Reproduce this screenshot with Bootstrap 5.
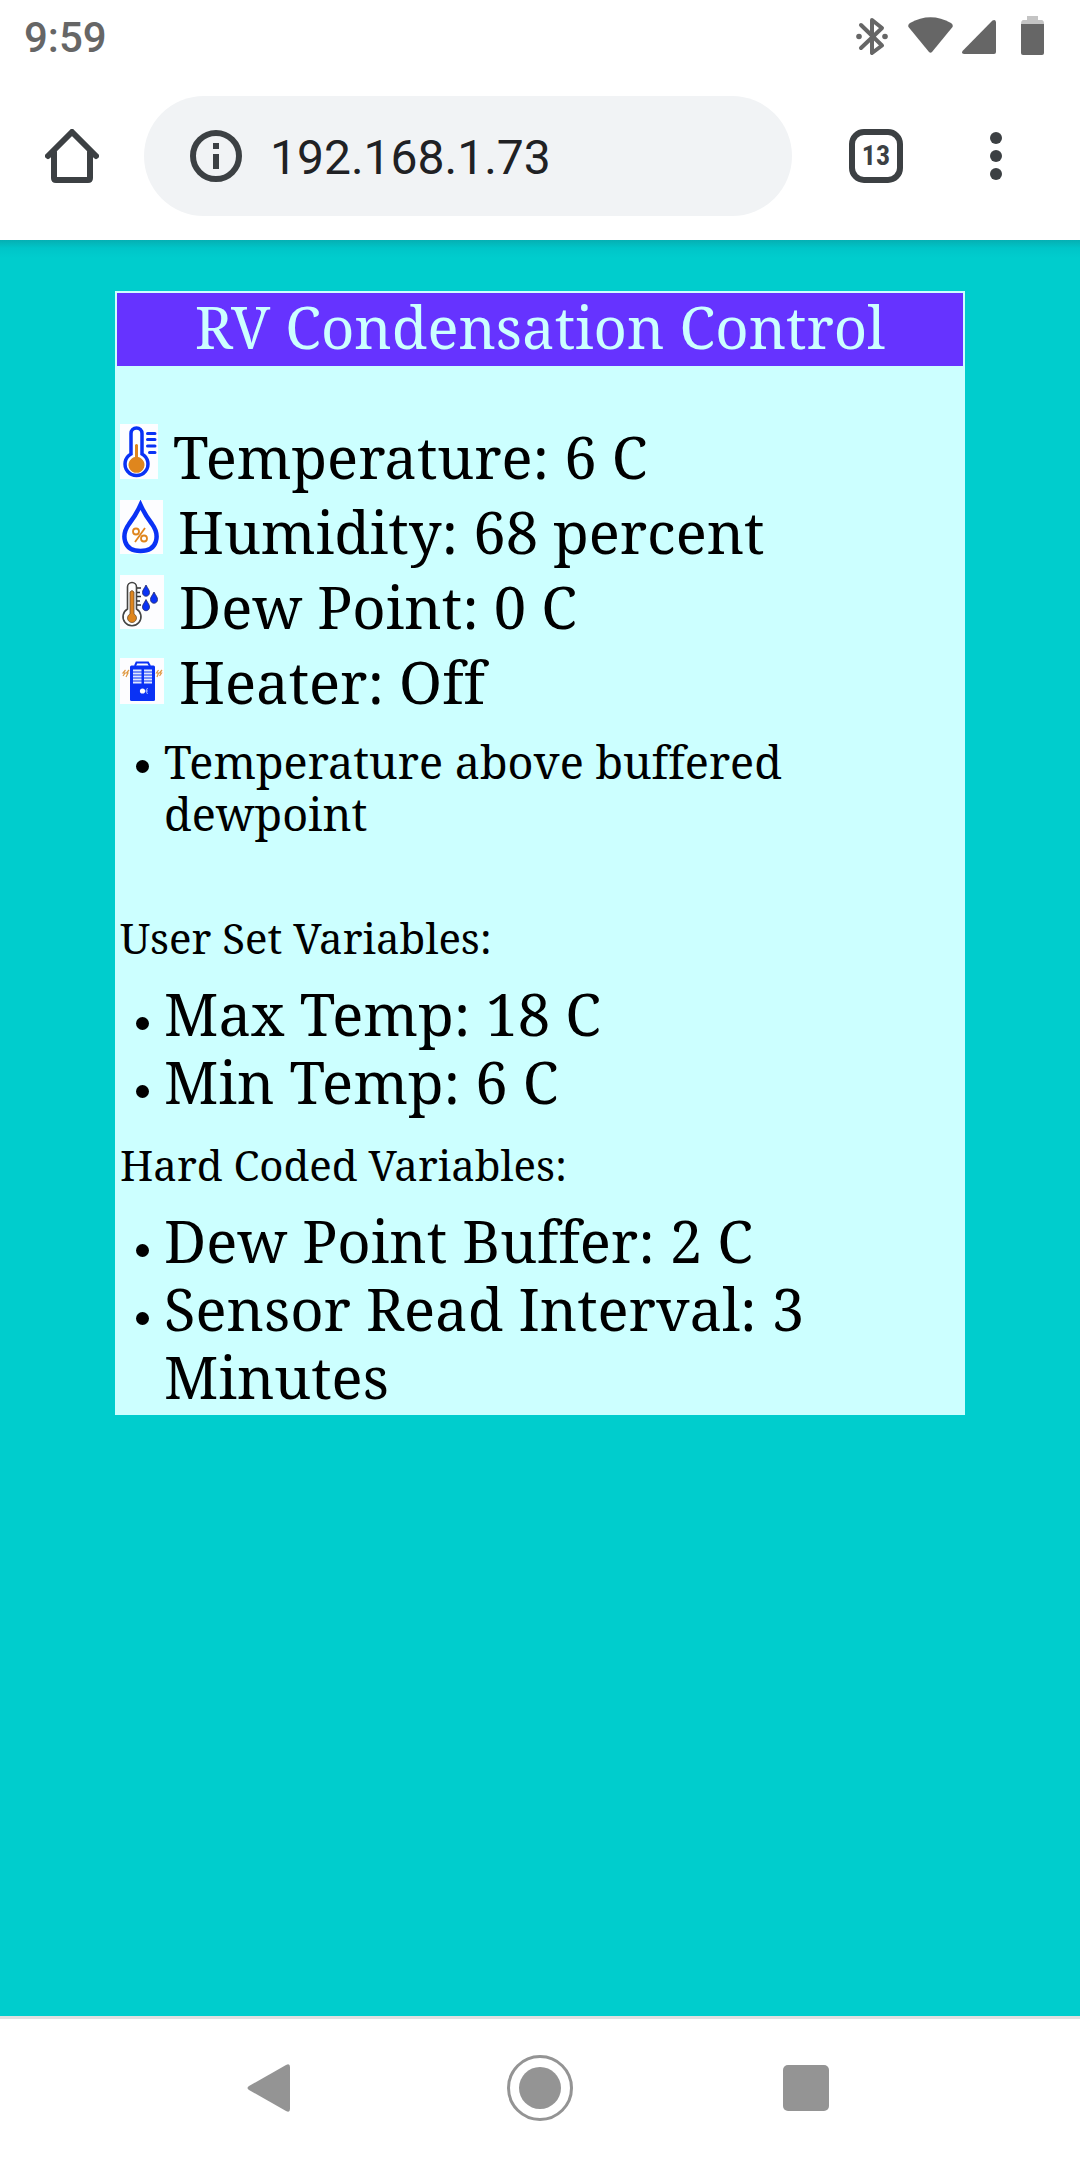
<!DOCTYPE html>
<html lang="en">
<head>
<meta charset="utf-8">
<meta name="viewport" content="width=device-width, initial-scale=1">
<title>RV Condensation Control</title>
<link href="https://cdn.jsdelivr.net/npm/bootstrap@5.3.0/dist/css/bootstrap.min.css" rel="stylesheet">
<style>
  body { font-family: Roboto, sans-serif; background: #fff; }
  svg { flex: none; }
  .status-bar { height: 72px; padding: 16px 36px 0 24px; color: #666; }
  .status-bar time { font-size: 42px; line-height: 44px; font-weight: 500; }
  .browser-bar { height: 168px; padding: 24px 54px 24px 45px; color: #3c4043; }
  .browser-bar .btn, .nav-keys .btn { --bs-btn-padding-x: 0; --bs-btn-padding-y: 0; flex: none; color: inherit; line-height: 1; border: 0; }
  .address { height: 120px; margin: 0 57px 0 45px; padding: 0 46px; background: #f1f3f5; gap: 28px; }
  .address input { font-size: 48px; line-height: 60px; color: #202124; }
  .address .url { padding: 3px 0 0; }
  .browser-bar .tab-count { width: 54px; height: 54px; border: 6px solid #3c4043; border-radius: 15px; font: 700 28px/42px "Roboto Condensed", Roboto, sans-serif; }
  .browser-bar .more { margin-left: 63px; width: 60px; }
  .page-view { background: linear-gradient(#05afb3, #00c5c8 8px, #00cdcd 18px); padding: 51px 115px; }
  .panel { background: #cff; color: #000; padding: 2px 2px 4px; font-family: "Noto Serif", "Droid Serif", "DejaVu Serif Condensed", "DejaVu Serif", serif; font-size: 58px; font-variant-ligatures: none; }
  .panel h1 { background: #63f; color: #cff; font-size: 58px; line-height: 67px; font-weight: 400; margin: 0 0 53px; padding-bottom: 6px; }
  .reading { line-height: 75px; padding-left: 3px; }
  .reading svg { margin-right: 15px; }
  .panel h2 { font-size: 42px; line-height: 56px; font-weight: 400; margin: 0; padding-left: 3px; }
  .panel ul { list-style: none; padding-left: 47px; line-height: 68px; margin: 14px 0 21px; }
  .panel li::before { content: ""; display: inline-block; width: 13px; height: 13px; border-radius: 50%; background: #000; margin: 0 15px 0 -28px; vertical-align: 6px; }
  .panel .notes { font-size: 45px; line-height: 52px; margin: 17px 0 70px; }
  .nav-keys { height: 144px; padding-bottom: 4px; border-top: 3px solid #e0e0e0; color: #949494; gap: 200px; }
</style>
</head>
<body>
<div class="d-flex flex-column min-vh-100">
  <header>
    <div class="status-bar d-flex justify-content-between align-items-start">
      <time>9:59</time>
      <div class="d-flex" aria-hidden="true">
        <svg width="188" height="40" viewBox="856 16 188 40" fill="#666">
          <path d="M861 25L882 45.500L872 53V20L882 28L861 48" fill="none" stroke="#666" stroke-width="4" stroke-linejoin="round" stroke-linecap="round"/>
          <circle cx="859" cy="36.500" r="2.800"/><circle cx="885" cy="36.500" r="2.800"/>
          <path d="M908.500 27Q907.500 24.500 910 23Q930.500 11.500 951 23Q953.500 24.500 952.500 27L932 52Q930.500 53.500 929 52Z"/>
          <path d="M963 50.500L992.500 20.500Q995.500 19 996 22V52Q996 54 994 54H964Q960.500 53.500 963 50.500Z"/>
          <path d="M1027 16H1038V20H1042Q1044 20.500 1044 24H1021Q1021 20.500 1023 20H1027Z" fill="#c4c4c4"/>
          <path d="M1021 24H1044V53Q1044 55 1042 55H1023Q1021 55 1021 53Z"/>
        </svg>
      </div>
    </div>
    <div class="browser-bar d-flex align-items-center">
      <button class="btn" type="button" aria-label="Home">
        <svg width="54" height="54" viewBox="0 0 54 54" fill="none" stroke="currentColor" stroke-width="6" stroke-linejoin="round" stroke-linecap="round"><path d="M3 27L27 3L51 27M9 23V49Q9 51 11 51H43Q45 51 45 49V23"/></svg>
      </button>
      <form class="address rounded-pill d-flex align-items-center flex-fill">
        <svg width="52" height="52" viewBox="0 0 52 52" aria-hidden="true"><circle cx="26" cy="26" r="23" fill="none" stroke="currentColor" stroke-width="6"/><path d="M23 13H29V19H23ZM23 24H29V39H23Z" fill="currentColor"/></svg>
        <input class="url border-0 bg-transparent flex-fill w-100" type="text" aria-label="Address" value="192.168.1.73">
      </form>
      <button class="btn tab-count" type="button" aria-label="13 open tabs">13</button>
      <button class="btn more" type="button" aria-label="More options">
        <svg width="12" height="48" viewBox="0 0 12 48" fill="currentColor"><circle cx="6" cy="6" r="6"/><circle cx="6" cy="24" r="6"/><circle cx="6" cy="42" r="6"/></svg>
      </button>
    </div>
  </header>

  <main class="page-view flex-fill">
    <div class="panel">
      <h1 class="text-center">RV Condensation Control</h1>
      <div class="reading"><svg class="d-inline align-baseline" width="38" height="55" viewBox="0 0 38 55"><path fill="#fdfdff" d="M0 0H38V55H0Z"/><path d="M11 30V9.500A5.500 5.500 0 0 1 22 9.500V30A11.500 11.500 0 1 1 11 30Z" fill="#fff" stroke="#0a32f5" stroke-width="3.500"/><path d="M15 21Q16.500 19 18 21V33A8 8 0 1 1 15 33Z" fill="#df861d"/><path d="M27.500 9.500H35M27.500 15.500H35M27.500 22H35M29.500 28.500H35" stroke="#0a32f5" stroke-width="3" stroke-linecap="round"/></svg>Temperature: 6 C</div>
      <div class="reading"><svg class="d-inline align-baseline" width="43" height="54" viewBox="0 0 43 54"><path fill="#fdfdff" d="M0 0H43V54H0Z"/><path d="M20.500 5Q16 15 9 24C1 35 3 51 20.500 51C38 51 40 35 32 24Q25 15 20.500 5Z" fill="#fff" stroke="#0a32f5" stroke-width="4.500"/><g fill="none" stroke="#df861d" stroke-width="1.800"><circle cx="16" cy="31.500" r="3"/><circle cx="24" cy="38.500" r="3"/><path d="M25 28L15 42"/></g></svg>Humidity: 68 percent</div>
      <div class="reading"><svg class="d-inline align-baseline" width="44" height="54" viewBox="0 0 44 54"><path fill="#fdfdff" d="M0 0H44V54H0Z"/><path d="M7.500 34V12A4.500 4.500 0 0 1 16.500 12V34A9 9 0 1 1 7.500 34Z" fill="#fff" stroke="#444" stroke-width="1.600"/><path d="M10 17Q12 14 14 17V39A4.500 4.500 0 1 1 10 39Z" fill="#df861d" stroke="#705030" stroke-width=".8"/><path d="M17 13H21M17 17.500H20M17 21.500H21M17 26H20M17 30H21" stroke="#333" stroke-width="1.400"/><g fill="#0a32f5" stroke="#222a66" stroke-width=".8"><path id="drop" d="M26 10C24 14 22.500 15 22.500 17.500C22.500 22.500 29.500 22.500 29.500 17.500C29.500 15 28 14 26 10Z"/><use href="#drop" x="8" y="7"/><use href="#drop" y="14.500"/></g></svg>Dew Point: 0 C</div>
      <div class="reading"><svg class="d-inline align-baseline" width="44" height="46" viewBox="0 0 44 46"><path fill="#fdfdff" d="M0 0H44V46H0Z"/><path d="M15 8L16.500 4.500H28L30 8" fill="none" stroke="#0a32f5" stroke-width="2"/><rect x="10" y="7.500" width="25" height="35.500" rx="1.500" fill="#0a32f5"/><path d="M13 12.500H21.500M13 15.500H21.500M13 18.500H21.500M13 21.500H21.500M13 24.500H21.500M24 12.500H32M24 15.500H32M24 18.500H32M24 21.500H32M24 24.500H32" stroke="#dfe8ff" stroke-width="1.800"/><circle cx="22.500" cy="33" r="2.600" fill="#fff"/><path d="M27.500 30L26 33L27.500 36M25.500 33H28" fill="none" stroke="#a9bcff"/><path d="M5.500 12L3 15H5L3 18M9 12L6.500 15H8L6 19M38.500 12L36.500 15H38.500L37 19M42 12L39.500 15H41.500L39.500 18" fill="none" stroke="#df9a45" stroke-width="1.200"/></svg>Heater: Off</div>
      <ul class="notes"><li>Temperature above buffered dewpoint</li></ul>
      <h2>User Set Variables:</h2>
      <ul><li>Max Temp: 18 C</li><li>Min Temp: 6 C</li></ul>
      <h2>Hard Coded Variables:</h2>
      <ul class="mb-0"><li>Dew Point Buffer: 2 C</li><li>Sensor Read Interval: 3 Minutes</li></ul>
    </div>
  </main>

  <nav class="nav-keys d-flex align-items-center justify-content-center bg-white" aria-label="System">
    <button class="btn" type="button" aria-label="Back"><svg width="66" height="66" viewBox="0 0 66 66" fill="currentColor"><path d="M8 31L45 10Q49 8 49 12V54Q49 58 45 56L8 35Q5 33 8 31Z"/></svg></button>
    <button class="btn" type="button" aria-label="Home screen"><svg width="66" height="66" viewBox="0 0 66 66"><circle cx="33" cy="33" r="31.500" fill="none" stroke="currentColor" stroke-width="3"/><circle cx="33" cy="33" r="21" fill="currentColor"/></svg></button>
    <button class="btn" type="button" aria-label="Recent apps"><svg width="66" height="66" viewBox="0 0 66 66" fill="currentColor"><rect x="10" y="10" width="46" height="46" rx="5"/></svg></button>
  </nav>
</div>
<script src="https://cdn.jsdelivr.net/npm/bootstrap@5.3.0/dist/js/bootstrap.bundle.min.js"></script>
</body>
</html>
